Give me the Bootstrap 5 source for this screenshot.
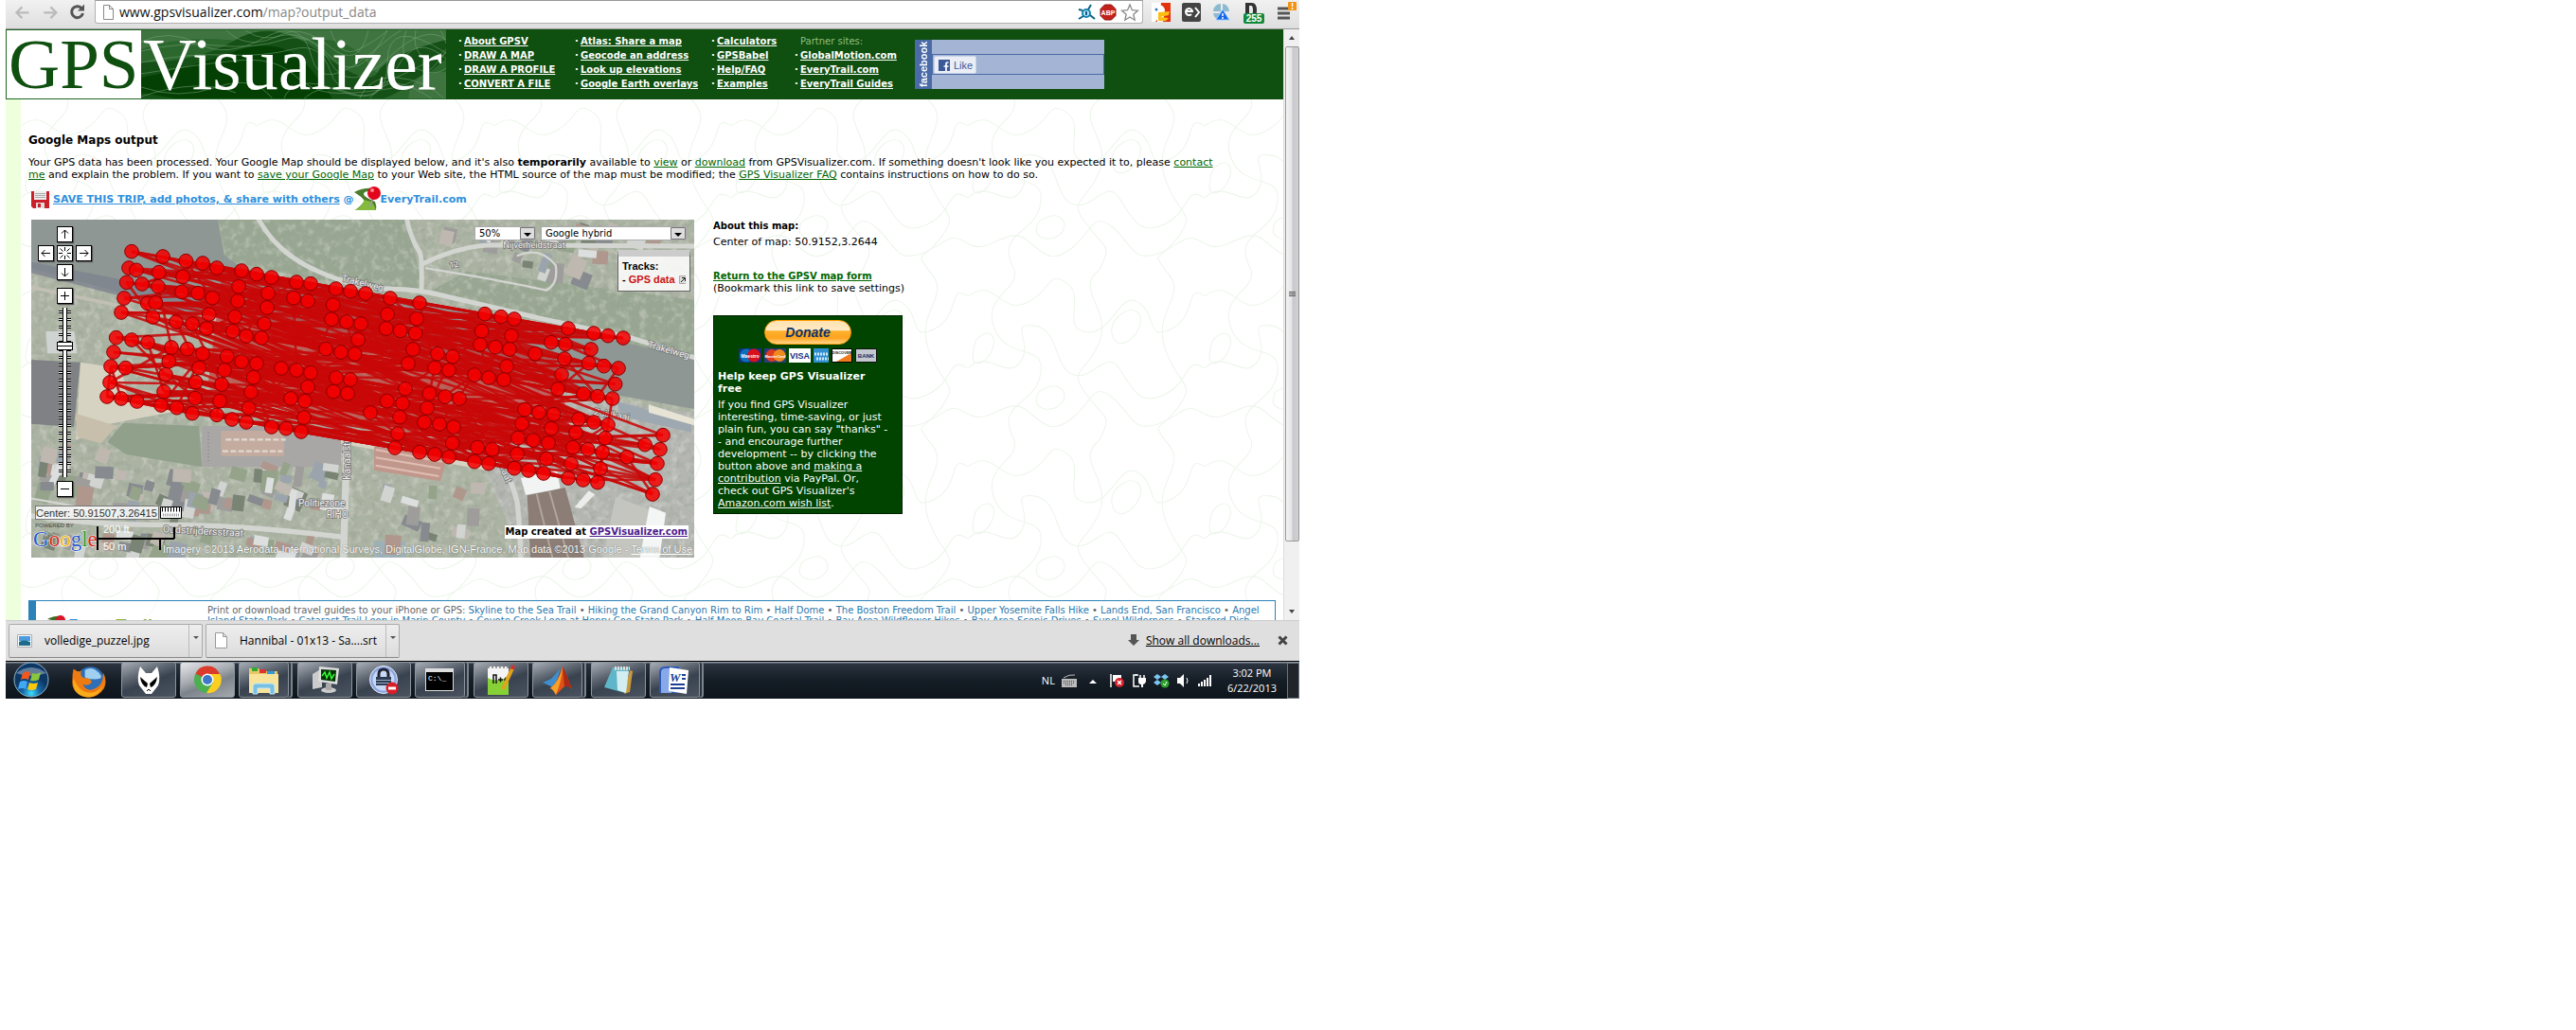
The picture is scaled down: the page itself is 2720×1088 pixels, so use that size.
<!DOCTYPE html>
<html lang="en">
<head>
<meta charset="utf-8">
<meta name="viewport" content="width=device-width, initial-scale=1">
<title>GPS Visualizer: Google Maps output</title>
<link href="https://cdn.jsdelivr.net/npm/bootstrap@5.3.0/dist/css/bootstrap.min.css" rel="stylesheet">
<style>
body{background:#fff;color:#000;font:11px/13px "DejaVu Sans",Verdana,sans-serif}
.screen{max-width:1366px;margin-left:6px}
.ui{font-family:"Open Sans","Noto Sans",sans-serif}
button{padding:0;border:0;background:none;color:inherit}
svg{display:block}
/* browser toolbar */
.toolbar{height:31px;background:linear-gradient(#f1f1f1,#dedede);border-bottom:1px solid #999;padding:0 2px 5px 1px}
.toolbar button{width:30px;height:25px}
.omni{height:25px;border:1px solid #b0b0b0;border-top-color:#999;border-radius:0 0 3px 3px;background:#fff;margin:0 9px 0 3px;padding:0 3px 0 5px}
.urlbox{font-size:14px;line-height:22px;color:#888}
.urlbox b{font-weight:400;color:#111}
.exts{gap:12px}
/* page header */
.viewport{height:624px;overflow:hidden}
.site{background:#0f4f0f;height:74px}
.brand{width:465px;border:1px solid #1c6620;font:78px/72px "Liberation Serif",serif}
.brand .gps{width:142px;background:#fff;color:#0f4f0f;padding-left:2px;font-size:75px}
.brand .viz{background:#0b480b;color:#fff;padding-left:2px;position:relative}
.brand .viz svg{position:absolute;inset:0}
.brand .viz span{position:relative}
.menus{display:grid;grid-template-columns:123px 144px 88px 127px;padding-left:13px}
.menu{font-size:10px;line-height:15px;font-weight:700;padding:5px 0 0;margin:0;list-style:none;white-space:nowrap}
.menu a{color:#fff}
.menu li::before{content:"·";color:#fff;display:inline-block;width:6px}
.menu li.plain::before{content:""}
.menu li.plain{font-weight:400;color:#8fbf7f}
.fb{width:200px;height:52px;margin-top:11px;background:#a4b4d4}
.fbtag{width:18px;height:52px;background:#4a6ba8;color:#fff;font:700 11px/18px "Liberation Sans",sans-serif;writing-mode:vertical-rl;transform:rotate(180deg);text-align:center}
.fbrow{height:22px;border:1px solid #4a6ba8;margin-top:15px;padding:1px}
.fbrow button{background:#eceef5;border:1px solid #cad4e7;color:#3b5998;font:11px/16px "Liberation Sans",sans-serif;width:45px;height:19px;border-radius:2px}
/* page body */
.main{border-left:16px solid #eeffdd;height:550px;padding:36px 8px 0;background-size:250px 180px;
background-image:url("data:image/svg+xml,%3Csvg xmlns='http://www.w3.org/2000/svg' viewBox='0 0 360 260' width='360' height='260' fill='none' stroke='%23edf6eb' stroke-width='1.6'%3E%3Cpath d='M0 40C40 10 50 70 90 50S120 0 150 20 140 90 180 95 230 30 260 50 270 110 310 90 330 20 360 40'/%3E%3Cpath d='M0 150C30 120 60 170 80 140S60 80 100 85 130 150 160 160 210 120 230 150 260 210 300 190 330 130 360 150'/%3E%3Cpath d='M0 220C30 240 60 190 90 215S130 250 160 225 190 170 220 195 250 250 290 235 330 200 360 220'/%3E%3Cpath d='M70 0C80 30 20 40 40 90S120 110 110 160 40 200 70 260M200 0C160 30 220 60 200 110S150 150 180 190 220 220 200 260M300 0C340 40 280 60 300 120S350 170 320 210 280 230 300 260'/%3E%3Cpath d='M230 70c25-20 40 0 30 20s-30 30-38 15 0-28 8-35zM120 180c20-10 35 10 22 24s-40 10-38-6 8-14 16-18zM20 100c15-10 25 5 15 25s-30 25-28 5 5-25 13-30z'/%3E%3C/svg%3E")}
.main a{color:#060}
.main h1{font-size:12px;line-height:14px;font-weight:700;margin:0 0 10px}
.intro{margin:0 0 6px;padding-right:50px}
.save{font-weight:700;font-size:11px;color:#2e8fdc;height:26px;margin:0 0 9px 3px}
.save a{color:#2e8fdc}
.mapbox{width:700px;height:357px;position:relative;margin-left:3px;flex:none;background:#a2aa98}
.over{position:absolute}
.pad{display:grid;grid-template-columns:repeat(3,17px);gap:3px;left:7px;top:7px}
.kbtn{width:17px;height:17px;background:#fff;border:1px solid #000;box-shadow:1px 1px 1px #555}
.zoomer{left:27px;top:72px;width:17px}
.railbox{height:179px}
.rail{appearance:none;-webkit-appearance:none;width:179px;height:17px;margin:0;transform:translate(-81px,81px) rotate(-90deg);
background:linear-gradient(#000,#000) 0 50%/100% 5px no-repeat,repeating-linear-gradient(90deg,transparent 0 5px,#000 5px 6px,#fff 6px 7px,#000 7px 8px) 50% 50%/100% 13px no-repeat}
.rail::-webkit-slider-runnable-track{height:17px;background:linear-gradient(#fff,#fff) 0 50%/100% 3px no-repeat}
.rail::-webkit-slider-thumb{-webkit-appearance:none;width:9px;height:17px;background:linear-gradient(90deg,#fff 3px,#000 3px 4px,#fff 4px);border:1px solid #000}
.picks{right:8px;top:7px;gap:5px}
.picks select{appearance:none;height:15px;border:1px solid #aaa;border-radius:0;padding:0 4px;font:10px/13px "DejaVu Sans",sans-serif;color:#000;
background:#fff url("data:image/svg+xml,%3Csvg xmlns='http://www.w3.org/2000/svg' width='16' height='13'%3E%3Cpath fill='%23ddd' stroke='%23777' d='M.5.5h15v12H.5z'/%3E%3Cpath d='M4 6h8l-4 4z'/%3E%3C/svg%3E") right/16px 13px no-repeat}
.tracks{right:4px;top:32px;width:77px;background:#fffd;border:1px solid #666;border-top:7px solid #ccc;font:700 11px/14px "Liberation Sans",sans-serif;padding:3px 4px;height:44px}
.tracks span{color:#c11}
.coord{left:4px;top:302px;width:131px;height:15px;border:1px solid #777;background:#fffc;font:11px/11px "Liberation Sans",sans-serif;color:#333;padding:0}
.made{right:6px;bottom:20px;background:#fff;font-size:10px;line-height:14px;font-weight:700;padding:0 1px}
.main .made a{color:#4b1a8c}
.credit{right:2px;bottom:2px;font:11px/13px "Liberation Sans",sans-serif;color:#fff;text-shadow:0 0 1px #444;white-space:nowrap}
.main .credit a{color:#fff}
.about{font-size:11px;line-height:13px;padding-left:20px}
.about .cap{font-size:10px}
.about .back{margin-top:23px}
.donate{width:200px;margin-top:22px;background:#040;color:#fff;border:1px solid #020;padding:4px}
.main .donate a{color:#fff}
.donate button{width:92px;height:26px;border-radius:13px;background:linear-gradient(#ffe3b0,#ffe9c4 40%,#ffb02e 45%,#ffa41f 75%,#ffd890);border:1px solid #f90;color:#0c3469;font:italic 700 14px/22px "Liberation Sans",sans-serif}
.guides{margin:45px 0 0;border:1px solid #2a82b8;border-left-width:8px;background:#fff8;font-size:10px;line-height:11px;color:#666;padding:4px 0 0 10px;white-space:nowrap}
.guides .side{width:171px;flex:none}
.main .guides a{color:#2a7ab0;text-decoration:none}
.sb{width:17px;background:#f0f0f0;border-left:1px solid #ddd}
.sb .thumb{height:523px;margin-left:1px;border:1px solid #999;border-radius:2px;background:linear-gradient(90deg,#f4f4f4,#e4e4e4 45%,#c8c8cd 55%,#d0d0d4)}
.sb button{height:18px}
/* download shelf */
.shelf{height:43px;background:#dfdfdf;border-top:1px solid #ccc;font-size:12px;color:#000;padding:0 12px 1px 3px;gap:3px}
.dl{height:36px;border:1px solid #aaa;border-bottom-color:#888;border-radius:2px;background:linear-gradient(#eee,#dcdcdc);width:205px}
.dl .more{width:14px;height:34px;border-left:1px solid #bbb}
/* taskbar */
.taskbar{height:40px;background:linear-gradient(#8a93a0 0 1px,#2b3440 2px,#151d26 50%,#0d141b);border-top:1px solid #000}
.plainbtn{width:61px;height:38px}
.task{width:58px;height:38px;margin-right:4px;border:1px solid #8c949e;border-radius:3px;background:linear-gradient(160deg,#a9aeb6,#5d6671 35%,#39434f 55%,#4a535f)}
.task.on{background:linear-gradient(160deg,#e6e7ea,#a9adb3 40%,#7d838b 60%,#a5a9af)}
.task.pile{width:53px;box-shadow:3px 0 0 -1px #2a333e,4px 0 0 0 #7b838d;margin-right:9px}
.tray{color:#fff;font-size:11px;line-height:16px;gap:7px}
</style>
<script src="https://cdn.jsdelivr.net/npm/bootstrap@5.3.0/dist/js/bootstrap.bundle.min.js"></script>
</head>
<body>
<div class="screen">

<div class="toolbar ui d-flex">
  <button aria-label="Back"><svg width="30" height="25"><path d="M10 12.500h15M17 6l-6.500 6.500L17 19" fill="none" stroke="#bbb" stroke-width="2.500" transform="translate(1 2) scale(.9)"/></svg></button>
  <button aria-label="Forward"><svg width="30" height="25"><path d="M7 12.500h15M15 6l6.500 6.500L15 19" fill="none" stroke="#bbb" stroke-width="2.500" transform="translate(3 2) scale(.9)"/></svg></button>
  <button aria-label="Reload"><svg width="30" height="25"><path d="M19 8.500A6 6 0 1 0 20.500 14" fill="none" stroke="#555" stroke-width="3"/><path d="M22 4.500v7h-7z" fill="#555"/></svg></button>
  <div class="omni d-flex align-items-center flex-grow-1">
    <svg width="20" height="20"><path d="M3.500 2.500h6l4 4v11h-10zM9.500 2.500v4h4" fill="#fff" stroke="#888"/></svg>
    <div class="urlbox flex-grow-1"><b>www.gpsvisualizer.com</b>/map?output_data</div>
    <div class="d-flex align-items-center gap-1">
      <svg width="20" height="20"><circle cx="10" cy="11" r="4" fill="#bfe8f7" stroke="#1683ad" stroke-width="2"/><path d="M6 8 2 7M12 7l3-5M14 13l5 4M7 14l-5 3" stroke="#0d6285" stroke-width="2"/><path d="M10 9v4" stroke="#0a5a85" stroke-width="2"/></svg>
      <svg width="18" height="18"><path d="M5.500 1h7L17 5.500v7L12.500 17h-7L1 12.500v-7z" fill="#c3221c" stroke="#8d1510"/><text x="9" y="12" font-size="7" font-weight="700" fill="#fff" text-anchor="middle" font-family="Liberation Sans">ABP</text></svg>
      <svg width="20" height="20"><path d="m10 2 2.400 5.700 6 .5-4.600 4 1.400 6L10 15l-5.200 3.200 1.400-6-4.600-4 6-.5z" fill="#fff" stroke="#888" stroke-width="1.300"/></svg>
    </div>
  </div>
  <div class="exts d-flex align-items-center">
    <svg width="20" height="20"><path fill="#fff" d="M0 0h20v20H0z"/><path fill="#e3320e" d="M10 0h10v20H4l4-6z"/><path fill="#fff" d="M2 6c2-6 11-5 12 2l-2 12H6z"/><path fill="#fdbd12" d="M7 10l12-1-1 4-9 2 9 1-3 3H7z"/><circle cx="5" cy="7" r="1.500" fill="#37b"/></svg>
    <svg width="20" height="20"><rect width="20" height="20" rx="2" fill="#444"/><path d="M5 9h6a3.500 3.500 0 1 0-1 3M14 5l4 5-4 5" fill="none" stroke="#fff" stroke-width="2"/></svg>
    <svg width="20" height="20"><path d="M9 1v8H1a8 8 0 0 1 8-8zM11 1a8 8 0 0 1 7 8h-7zM1 11h8v7a8 8 0 0 1-8-7z" fill="#8cbad0"/><path d="M11 7l7 11H4z" fill="#1565e8" stroke="#9cf"/><path d="M11 11v3M11 15v2" stroke="#fff" stroke-width="1.500"/></svg>
    <svg width="24" height="24"><path d="M3 2h7q5 0 5 8t-5 8H3zM7 5v10h2q2 0 2-5t-2-5z" fill="#333" fill-rule="evenodd"/><rect x="1" y="13" width="22" height="11" rx="2" fill="#128a3c"/><text x="12" y="22" font-size="10" font-weight="700" fill="#fff" text-anchor="middle" font-family="Liberation Sans">255</text></svg>
    <svg width="22" height="24"><path d="M1 8h13M1 13h13M1 18h13" stroke="#555" stroke-width="3"/><rect x="12" y="1" width="9" height="9" rx="1" fill="#f29312"/><path d="M16.500 2v4M16.500 7v2" stroke="#fff" stroke-width="1.500"/></svg>
  </div>
</div>

<div class="viewport d-flex">
 <div class="flex-grow-1">
  <header class="site d-flex">
    <div class="brand d-flex">
      <div class="gps">GPS</div>
      <div class="viz flex-grow-1">
        <svg width="322" height="72" fill="#2a6a2d"><path fill="#3f7440" d="M0 0h322v74H0z"/><path fill="#2c672e" d="M0 20Q40 6 90 10t90 0 60 26 82-6v44H0z"/><path fill="#155016" d="M0 34q60 0 100-24t90 14 60 20 72-34v20q-40 34-72 44H0z"/><path fill="#044004" d="M0 50Q50 40 100 22t80 20 20 32H50L0 66z"/><path d="M322 44q-40 0-40 30h40z" fill="#3f7440"/><g fill="none" stroke="#79a57a" stroke-width=".7" opacity=".75"><path d="M0 12q30-14 60 2t70-6 50 20 70-10 72-4M0 22q40-10 80-6t70-6 50 24 60-4 62-20M0 34q50-10 90-8t70-6 40 24 60 10 62-34M0 46q60-10 100-14t60 14 40 20 60-4 62-40M0 60q40 14 80 0t60 14M90 0q20 20 50 8t60 20 60-28M110 0q20 14 40 4t50 14 40-18M0 70q60-20 100-4M150 74q10-30 60-10t50-30 62-10M170 74q20-20 50-8t50-26 52-10M230 74q10-26 40-24t52 24M240 74q14-20 30-18t40 18M200 0q10 30 30 20t30-20M280 0q-10 30 10 40t32 0M290 0q-4 20 8 28t24-4"/></g></svg>
        <span>Visualizer</span>
      </div>
    </div>
    <nav class="menus">
    <ul class="menu"><li><a href="#">About GPSV</a></li><li><a href="#">DRAW A MAP</a></li><li><a href="#">DRAW A PROFILE</a></li><li><a href="#">CONVERT A FILE</a></li></ul>
    <ul class="menu"><li><a href="#">Atlas: Share a map</a></li><li><a href="#">Geocode an address</a></li><li><a href="#">Look up elevations</a></li><li><a href="#">Google Earth overlays</a></li></ul>
    <ul class="menu"><li><a href="#">Calculators</a></li><li><a href="#">GPSBabel</a></li><li><a href="#">Help/FAQ</a></li><li><a href="#">Examples</a></li></ul>
    <ul class="menu"><li class="plain">Partner sites:</li><li><a href="#">GlobalMotion.com</a></li><li><a href="#">EveryTrail.com</a></li><li><a href="#">EveryTrail Guides</a></li></ul>
    </nav>
    <div class="fb d-flex"><div class="fbtag">facebook</div>
      <div class="flex-grow-1"><div class="fbrow d-flex"><button class="d-flex align-items-center gap-1 ps-1"><svg width="12" height="12"><path fill="#3b5998" d="M0 0h12v12H0z"/><path d="M10.500 3H9q-1 0-1 1v8M5.500 7h5" fill="none" stroke="#fff" stroke-width="1.700"/></svg>Like</button></div></div></div>
  </header>

  <main class="main">
    <h1>Google Maps output</h1>
    <p class="intro">Your GPS data has been processed. Your Google Map should be displayed below, and it's also <b>temporarily</b> available to <a href="#">view</a> or <a href="#">download</a> from GPSVisualizer.com. If something doesn't look like you expected it to, please <a href="#">contact me</a> and explain the problem. If you want to <a href="#">save your Google Map</a> to your Web site, the HTML source of the map must be modified; the <a href="#">GPS Visualizer FAQ</a> contains instructions on how to do so.</p>
    <div class="save d-flex align-items-center">
      <svg width="19" height="19" class="me-1"><path d="M0 1h19v18H2l-2-2z" fill="#cb1f2a"/><path fill="#eee" d="M3 1h13v9H3z"/><path stroke="#aaa" d="M4 3.500h11M4 5.500h11M4 7.500h11"/><path fill="#ddd" d="M5 13h9v6H5z"/><path fill="#cb1f2a" d="M7 14h3v4H7z"/></svg>
      <span><a href="#">SAVE THIS TRIP, add photos, &amp; share with others</a> @</span>
      <svg width="28" height="26"><path d="M0 6q10-5 19-4l-3 3q-6 0-6 3t12 8q2 5 1 9H1q11-8 9-11T0 6z" fill="#4a7d2c"/><path d="M1 25q10-6 9-11l8 2q4 4 5 9z" fill="#85bb3c"/><path d="M20 12l-3 9" stroke="#999" stroke-width="2"/><circle cx="21" cy="7" r="7" fill="#e2061d"/><circle cx="19" cy="4" r="2" fill="#ff8a8a"/></svg>
      <span>EveryTrail.com</span>
    </div>

    <div class="d-flex">
      <div class="mapbox">
        <svg width="700" height="357" viewBox="99 36 2100 1071" id="sat" font-family="Roboto, sans-serif">
          <defs>
            <filter id="grain" x="0" y="0" width="1" height="1"><feTurbulence type="fractalNoise" baseFrequency=".045" numOctaves="4" seed="4"/><feColorMatrix values="0 0 0 0 .22  0 0 0 0 .28  0 0 0 0 .2  2.6 0 0 0 -1.2"/></filter>
            <filter id="glint" x="0" y="0" width="1" height="1"><feTurbulence type="fractalNoise" baseFrequency=".04" numOctaves="3" seed="9"/><feColorMatrix values="0 0 0 0 .86  0 0 0 0 .85  0 0 0 0 .8  2.6 0 0 0 -1.25"/></filter>
          </defs>
          <path fill="#9ba491" d="M99 36h2100v1071H99z"/>
          <path fill="#84957c" d="M690 36h600l50 220-340-30-280-60zM1480 200l719 90v190l-850-210z"/>
          <path fill="#a6a8a3" d="M1640 560l559 90v457h-540L1500 760zM640 690h460v120H640z"/>
          <path filter="url(#grain)" opacity=".55" d="M99 36h2100v1071H99z"/>
          <path filter="url(#glint)" opacity=".35" d="M99 36h2100v1071H99z"/>
          <path fill="#78827f" d="M99 36h591l20 110q60 70 390 110l250 50 250 45 250 45 349 80v160l-499-90-1000-200-140-30-461-126z"/>
          <path fill="#646a78" opacity=".8" d="M99 170l360 70 200 40-30 60-200-50-330-85z"/>
          <path d="M99 250l260 55 340 110" fill="none" stroke="#b6b2a6" stroke-width="12"/>
          <path fill="#65686c" d="M99 480l155 8-20 205-135-10z"/><path fill="#c6cac8" d="M145 390h90l10 70H150z"/>
          <path fill="#cfcab6" d="M255 488l130 20 20 100 250 50 900 160-20 12-700-130-260-60-235 45-100 50z"/><path fill="#bcb29a" d="M240 650l130 40-50 55-75-20z"/>
          <path fill="#7b8d74" d="M340 740l50-60 240 10 10 130-240-40z"/>
          <path fill="#989595" d="M640 690h410l30 20v110H640z"/><path fill="#b99b8c" d="M700 705h200v80H700z"/><path stroke="#ddd2c8" stroke-width="7" stroke-dasharray="18 7" d="M715 733h190M705 770h190"/><path stroke="#666" stroke-width="4" stroke-dasharray="3 8" d="M660 710v95"/>
          <path fill="#b58375" d="M1185 745l230 50-20 70-210-35z"/><path stroke="#d9b1a4" stroke-width="6" d="M1190 765l210 38M1190 790l205 34M1190 815l200 34"/>
          <path fill="#eef2f0" d="M1650 855l115-25 10 60-110 18z"/><path fill="#75635b" d="M1670 910l120-25 60 222h-170z"/><path stroke="#a09488" stroke-width="6" d="M1700 905l50 202M1740 895l60 212"/>
          <path fill="#b9bab2" d="M1950 915l110 40-30 152h-120z"/><path fill="#f1f4f3" d="M2057 945l52 20-20 142h-62z"/><path fill="#e8e9e6" d="M1865 895l20 12-45 45-20-5z"/><path fill="#8b97a0" d="M1950 610l240 70v30l-220-50z"/><path fill="#e3dfcd" d="M2055 622l144 46v20l-144-41z"/>
          <path fill="#83a0b3" opacity=".7" d="M1185 1055h100v52h-100z"/>
          <g id="roofs"></g>
          <path fill="#fff" opacity=".17" d="M99 36h2100v1071H99z"/>
          <g fill="none" stroke="#d3d5d1" stroke-linecap="round">
            <path stroke-width="15" d="M820 36q60 110 190 165 110 50 230 55 80 0 160 20l320 75 280 60 199 62"/>
            <path stroke-width="15" d="M1288 30q10 60 42 110 8 20 5 115M1335 178q120-60 230-62l634 4"/>
            <path stroke-width="7" d="M1350 190q250 40 380 70 40-20 30-80-50-60-120-30M99 920q180 30 290 60"/>
            <path stroke-width="22" d="M1100 700l-12 407"/>
            <path stroke-width="16" d="M99 975q200 30 420 28t560 38M1560 760q60 90 78 170 8 60 12 177"/>
          </g>
          <g fill="#eee" stroke="#777" stroke-width="5" paint-order="stroke" font-size="30">
            <text transform="translate(1080 230) rotate(14)">Trakelweg</text><text x="1594" y="126" font-size="28">Nijverheidstraat</text><text transform="translate(1425 190) rotate(-10)" font-size="26">12</text>
            <text transform="translate(2050 440) rotate(16)">Trakelweg</text><text transform="translate(1880 655) rotate(9)">Zuidkaai</text>
            <text transform="translate(1110 860) rotate(-90)">Kanaalstraat</text><text x="945" y="945">Politiezone</text><text x="1034" y="980">RIHO</text>
            <text transform="translate(515 1027) rotate(3)" font-size="32">Oudstrijdersstraat</text><text transform="translate(1575 800) rotate(68)">straat</text>
          </g>
          <path fill="#c81010" opacity=".5" d="M700 230l560 110 500 130 60 300-760-90-400-130z"/>
          <g id="trk" stroke="#c80808" stroke-width="8" stroke-opacity=".88"></g>
          <g id="pts" fill="#f40000" fill-opacity=".86" stroke="#8c0000" stroke-width="3"></g>
        </svg>
        <div class="over pad">
          <i></i><button class="kbtn" aria-label="Pan up"><svg width="15" height="15"><path d="M7.500 12V3M4 6.500 7.500 3 11 6.500" fill="none" stroke="#000"/></svg></button><i></i>
          <button class="kbtn" aria-label="Pan left"><svg width="15" height="15"><path d="M12 7.500H3M6.500 4 3 7.500 6.500 11" fill="none" stroke="#000"/></svg></button>
          <button class="kbtn" aria-label="Center"><svg width="15" height="15"><path d="M7.500 1v4M7.500 14v-4M1 7.500h4M14 7.500h-4M2.500 2.500l3 3M12.500 2.500l-3 3M2.500 12.500l3-3M12.500 12.500l-3-3" stroke="#000"/></svg></button>
          <button class="kbtn" aria-label="Pan right"><svg width="15" height="15"><path d="M3 7.500h9M8.500 4 12 7.500 8.500 11" fill="none" stroke="#000"/></svg></button>
          <i></i><button class="kbtn" aria-label="Pan down"><svg width="15" height="15"><path d="M7.500 3v9M4 8.500 7.500 12 11 8.500" fill="none" stroke="#000"/></svg></button>
        </div>
        <div class="over zoomer">
          <button class="kbtn d-block" aria-label="Zoom in"><svg width="15" height="15"><path d="M3 7.500h9M7.500 3v9" stroke="#000"/></svg></button>
          <div class="railbox mt-1"><input class="rail" type="range" min="0" max="100" value="79" aria-label="Zoom level"></div>
          <button class="kbtn d-block mt-1" aria-label="Zoom out"><svg width="15" height="15"><path d="M3 7.500h9" stroke="#000"/></svg></button>
        </div>
        <div class="over picks d-flex">
          <select style="width:65px" aria-label="Opacity"><option>50%</option></select>
          <select style="width:154px" aria-label="Map type"><option>Google hybrid</option></select>
        </div>
        <div class="over tracks"><div>Tracks:</div><div class="d-flex align-items-center gap-1 text-nowrap"><div>- <span>GPS data</span></div><svg width="9" height="9"><path fill="#ddd" stroke="#aaa" d="M.5.5h8v8h-8z"/><path d="M2 7l4-4M3 2.500h3.500V6" fill="none" stroke="#222"/></svg></div></div>
        <input class="over coord" value="Center: 50.91507,3.26415" aria-label="Map center">
        <svg class="over" style="left:136px;top:302px" width="24" height="15" aria-hidden="true"><path fill="#fff" stroke="#000" d="M.500 1.500h22v12H.500z"/><path stroke="#000" stroke-dasharray="1 2" stroke-width="5" d="M2 4h20"/><path stroke="#999" stroke-dasharray="1 1" stroke-width="3" d="M3 10h18"/></svg>
        <svg class="over" style="left:2px;top:318px" width="152" height="37" font-family="Liberation Sans">
          <text x="2" y="7" font-size="6" fill="#444">POWERED BY</text>
          <g font-family="Liberation Serif" font-size="23" stroke="#fff" stroke-width="1" paint-order="stroke"><text x="0" y="27"><tspan fill="#2a5cc8">G</tspan><tspan fill="#d62c1f">o</tspan><tspan fill="#efb71a">o</tspan><tspan fill="#2a5cc8">g</tspan><tspan fill="#2c9b3a">l</tspan><tspan fill="#d62c1f">e</tspan></text></g>
          <path d="M68 6v25M68 19h81M149 7v12M134 19v12" stroke="#000" stroke-width="2" fill="none"/>
          <text x="74" y="13" font-size="11" fill="#fff">200 ft</text><text x="74" y="31" font-size="11" fill="#fff">50 m</text>
        </svg>
        <div class="over made">Map created at <a href="#">GPSVisualizer.com</a></div>
        <div class="over credit">Imagery ©2013 Aerodata International Surveys, DigitalGlobe, IGN-France, Map data ©2013 Google - <a href="#">Terms of Use</a></div>
      </div>
      <aside class="about">
        <div class="cap fw-bold">About this map:</div><div class="mt-1">Center of map: 50.9152,3.2644</div>
        <div class="cap back"><a href="#" class="fw-bold">Return to the GPSV map form</a></div><div>(Bookmark this link to save settings)</div>
        <div class="donate">
          <div class="text-center mb-1"><button>Donate</button></div>
          <svg class="mx-auto mb-2" width="146" height="15" font-family="Liberation Sans" font-size="6" font-weight="700" text-anchor="middle"><path fill="#15307a" d="M0 0h24v15H0z"/><circle cx="8" cy="7.500" r="7" fill="#0b6fc2"/><circle cx="16" cy="7.500" r="7" fill="#d8101a"/><text x="12" y="10" font-size="5" fill="#fff">Maestro</text><path fill="#2b3c7c" d="M27 0h23v15H27z"/><circle cx="35" cy="7.500" r="6.500" fill="#e03a20"/><circle cx="43" cy="7.500" r="6.500" fill="#f08a1c"/><text x="38.500" y="10" font-size="4" fill="#fff">MasterCard</text><path fill="#fff" d="M53 0h23v15H53z"/><text x="64.500" y="11" font-size="9" fill="#1a2f80">VISA</text><path fill="#2f8fd0" d="M79 0h16v15H79z"/><path stroke="#cfe9f8" stroke-width="3" stroke-dasharray="2 1" d="M80 6h15M82 11h13"/><path fill="#fff" stroke="#000" d="M98.500.500h21v14h-21z"/><path fill="#ee7c1c" d="M119 5v9h-16z"/><text x="109" y="6" font-size="4" fill="#222">DISCOVER</text><path fill="#c3c7cf" stroke="#111" d="M123.500.500h22v14h-22z"/><text x="134.500" y="10" fill="#1a2a66">BANK</text></svg>
          <div class="fw-bold mb-1">Help keep GPS Visualizer<br>free</div>
          <div class="text-nowrap">If you find GPS Visualizer<br>interesting, time-saving, or just<br>plain fun, you can say "thanks" -<br>- and encourage further<br>development -- by clicking the<br>button above and <a href="#">making a<br>contribution</a> via PayPal. Or,<br>check out GPS Visualizer's<br><a href="#">Amazon.com wish list</a>.</div>
        </div>
      </aside>
    </div>

    <div class="guides d-flex">
      <div class="side"><svg width="171" height="26"><path d="M2 15q8-4 14-3l-4 5z" fill="#3c6b24"/><circle cx="16" cy="16" r="5" fill="#d9152a"/><text x="24" y="27" font-size="16" font-weight="700" font-family="DejaVu Sans" fill="#2e8fdc">Every<tspan fill="#8db33a">Trail</tspan></text></svg></div>
      <div>Print or download travel guides to your iPhone or GPS: <a href="#">Skyline to the Sea Trail</a> • <a href="#">Hiking the Grand Canyon Rim to Rim</a> • <a href="#">Half Dome</a> • <a href="#">The Boston Freedom Trail</a> • <a href="#">Upper Yosemite Falls Hike</a> • <a href="#">Lands End, San Francisco</a> • <a href="#">Angel<br>Island State Park</a> • <a href="#">Cataract Trail Loop in Marin County</a> • <a href="#">Coyote Creek Loop at Henry Coe State Park</a> • <a href="#">Half Moon Bay Coastal Trail</a> • <a href="#">Bay Area Wildflower Hikes</a> • <a href="#">Bay Area Scenic Drives</a> • <a href="#">Sunol Wilderness</a> • <a href="#">Stanford Dish</a></div>
    </div>
  </main>
 </div>
 <div class="sb d-flex flex-column">
   <button aria-label="Scroll up"><svg width="16" height="18"><path d="M5 11l3-4 3 4z" fill="#444"/></svg></button>
   <div class="thumb d-flex align-items-center"><svg width="13" height="8"><path d="M3 1.500h7M3 3.500h7M3 5.500h7" stroke="#555"/></svg></div>
   <button class="mt-auto" aria-label="Scroll down"><svg width="16" height="18"><path d="M5 7l3 4 3-4z" fill="#444"/></svg></button>
 </div>
</div>

<div class="shelf ui d-flex align-items-center">
  <div class="dl d-flex align-items-center"><svg width="17" height="14" class="mx-2 ms-2"><path fill="#fff" stroke="#aaa" d="M.500.500h15v13H.500z"/><path fill="#4d9ade" d="M2 2h12v5H2z"/><path fill="#1d6c8a" d="M2 8q5-3 12 0v4H2z"/></svg><span class="ms-1 flex-grow-1">volledige_puzzel.jpg</span><button class="more" aria-label="File menu"><svg width="13" height="34"><path d="M4 12h6l-3 3z" fill="#555"/></svg></button></div>
  <div class="dl d-flex align-items-center"><svg width="15" height="17" class="mx-2 ms-2"><path fill="#fff" stroke="#999" d="M1.500.500h8l4 4v12h-12zM9.500.500v4h4"/></svg><span class="ms-1 flex-grow-1">Hannibal - 01x13 - Sa....srt</span><button class="more" aria-label="File menu"><svg width="13" height="34"><path d="M4 12h6l-3 3z" fill="#555"/></svg></button></div>
  <svg width="12" height="13" class="ms-auto"><path d="M3 0h6v6h3l-6 6-6-6h3z" fill="#555"/></svg>
  <a href="#" class="text-black ms-1 me-3">Show all downloads...</a>
  <button aria-label="Close"><svg width="11" height="11"><path d="M1.500 1.500l8 8M9.500 1.500l-8 8" stroke="#444" stroke-width="3"/></svg></button>
</div>

<div class="taskbar ui d-flex">
  <button class="plainbtn" aria-label="Start"><svg width="61" height="38"><defs><radialGradient id="orb" cy=".9"><stop offset="0" stop-color="#3be0ff"/><stop offset=".5" stop-color="#1768a8"/><stop offset="1" stop-color="#0d3764"/></radialGradient></defs><circle cx="27" cy="19" r="18" fill="url(#orb)" stroke="#8fb5cc"/><path d="M11 12q16-12 32 0-16 6-32 0z" fill="#fff" opacity=".35"/><path d="M18 12q4-3 8-1l-2 8q-4-2-8 0z" fill="#f0591e"/><path d="M28 12q5 2 9-1l-2 8q-4 2-9 1z" fill="#8cc63f"/><path d="M15 21q4-2 8 0l-2 8q-3-2-8 0z" fill="#3fa9f5"/><path d="M25 22q4 2 9 0l-2 7q-5 2-9 0z" fill="#fdc70c"/></svg></button>
  <button class="plainbtn" aria-label="Firefox"><svg width="61" height="38"><g transform="translate(-5 -2) scale(1.2)"><circle cx="28" cy="18" r="12" fill="#2e6fb8"/><path d="M23 9q6-4 12 2t-3 6-9-2z" fill="#9fd0f0"/><path d="M13 8q5 4 7 1-2 6 3 7 6 0 6 4-4 4-8 1 3 7 9 5 10-3 9-15 4 7 1 14-6 9-15 8Q11 30 12 18q0-6 1-10z" fill="#ee7a12"/><path d="M13 16q-2 15 12 17 12 0 15-14-2 9-12 10-10 0-15-13z" fill="#f9ab1a"/></g></svg></button>
  <button class="task" aria-label="foobar2000"><svg width="56" height="36"><path d="M19 4l6 7h6l6-7q4 12 1 20l-7 9h-6l-7-9Q15 16 19 4z" fill="#fff"/><path d="M19 15l8 7-1 4q-6-2-7-11zM37 15l-8 7 1 4q6-2 7-11z"/><path d="M26 30l2-2 2 2" fill="none" stroke="#000"/></svg></button>
  <button class="task on" aria-label="Chrome"><svg width="56" height="36"><circle cx="28" cy="18" r="14" fill="#4caf50"/><path d="M28 18 15.500 11.500A14 14 0 0 1 41 12z" fill="#dc3a2a"/><path d="M28 12h13.300A14 14 0 0 1 27 32l7-11z" fill="#fccf1f"/><circle cx="28" cy="18" r="6.500" fill="#fff"/><circle cx="28" cy="18" r="5" fill="#3f78c8"/></svg></button>
  <button class="task pile" aria-label="Explorer"><svg width="51" height="36"><path d="M10 6h10l2 3h18v23H10z" fill="#e9c765"/><path d="M13 5h6v4h-6z" fill="#3a3"/><path d="M21 7h7v4h-7z" fill="#d33"/><path d="M29 9h8v3h-8z" fill="#39d"/><path d="M10 12h31v20H10z" fill="#f8e39a"/><path d="M14 33V25q0-3 3-3h17q3 0 3 3v8h-5v-6H19v6z" fill="#79bfe2" stroke="#c6ecfa"/></svg></button>
  <button class="task" aria-label="PuTTY"><svg width="56" height="36"><path d="M15 12l10-6v20l-10 2z" fill="#ccc"/><path d="M22 4l21 2-2 17-20-3z" fill="#ddd"/><path d="M24 7l16 1-1 12-15-2z" fill="#053205"/><path d="M25 14l3-4 2 6 3-6 2 7 3-5" fill="none" stroke="#3f3" stroke-width="1.500"/><ellipse cx="32" cy="29" rx="8" ry="3" fill="#ccc"/><path d="M29 22h6v7h-6z" fill="#aaa"/></svg></button>
  <button class="task" aria-label="KeePass"><svg width="56" height="36"><circle cx="28" cy="18" r="14.500" fill="#89a6e0" stroke="#eef"/><circle cx="28" cy="18" r="11.500" fill="#c9d8f5"/><path d="M23 16v-4q0-5 5-5t5 5v4" fill="none" stroke="#223" stroke-width="3"/><path d="M20 15h16v9H20z" fill="#2b3a55"/><path stroke="#9ab" d="M20 18.500h16M20 21.500h16"/><circle cx="37" cy="27" r="6.500" fill="#d81e28"/><path d="M33 27h8" stroke="#fff" stroke-width="3"/></svg></button>
  <button class="task pile" aria-label="Command prompt"><svg width="51" height="36"><path fill="#ddd" d="M10 6h30v24H10z"/><path fill="#000" d="M11 10h28v19H11z"/><text x="13" y="19" font-size="8" fill="#fff" font-family="Liberation Mono">C:\_</text></svg></button>
  <button class="task" aria-label="Notepad++"><svg width="56" height="36"><path d="M14 4h22v30H14z" fill="#f5f5f5"/><path d="M14 16q10 6 22-2v20H14z" fill="#86d136"/><path stroke="#999" stroke-dasharray="2 2" stroke-width="2" d="M14 5h22"/><path d="M20 22v-9h3v9M25 18h5M27.500 15.500v5M31 18h4M33 15.500v5" fill="none" stroke="#111" stroke-width="1.500"/><path d="M40 6 30 28" stroke="#e4a11b" stroke-width="4"/><path d="M41 3l-1 4" stroke="#c33" stroke-width="4"/></svg></button>
  <button class="task pile" aria-label="MATLAB"><svg width="51" height="36"><path d="M10 21l9-4q5-5 10-12l-6 22z" fill="#3f8fd0"/><path d="M31 4q4 8 10 24-6-6-9-2l-8 8q-3-6-6-7 8-6 13-23z" fill="#e0521a"/><path d="M31 4q-1 16-7 30-3-6-6-7 9-6 13-23z" fill="#f7a12b"/><path d="M31 4q4 8 10 24-6-6-8-2z" fill="#a82a14"/></svg></button>
  <button class="task" aria-label="Notepad"><svg width="56" height="36"><path d="M40 8l3 1-3 22-6 2z" fill="#c99a3c"/><path d="M22 5h17l-4 27-22-6z" fill="#5fb6c8"/><path d="M26 9h13l-3 23-9-3z" fill="#d3eef3"/><path d="M24 6h16" stroke="#ddd" stroke-width="4" stroke-dasharray="2 1"/></svg></button>
  <button class="task pile" aria-label="Word"><svg width="51" height="36"><path d="M9 10q0-6 7-6h14v28H9z" fill="#2c58b8"/><path d="M11 10q0-4 5-4h6v26H11z" fill="#88a9e8"/><path d="M20 5l20 3-2 25-19-3z" fill="#fff"/><text x="20" y="20" font-size="13" font-weight="700" font-style="italic" fill="#1d3f94" font-family="Liberation Serif">W</text><path d="M33 13h4M33 17h4M21 23h15M21 27h15" stroke="#1d3f94" stroke-width="2"/></svg></button>
  <div class="tray ms-auto d-flex align-items-center">
    <span>NL</span>
    <svg width="16" height="14"><path fill="#bbb" d="M0 5h16v9H0z"/><path d="M2 4q6-4 12-3" fill="none" stroke="#bbb"/><path stroke="#444" stroke-dasharray="1 1" d="M2 7.500h12M2 9.500h12M4 11.500h8"/></svg>
    <svg width="20" height="8"><path d="M6 7l4-4 4 4z" fill="#fff"/></svg>
    <svg width="17" height="16"><path d="M2 1v14" stroke="#fff" stroke-width="1.500"/><path d="M4 2h9v7H4z" fill="#fff"/><circle cx="11" cy="10" r="5" fill="#d8202a"/><path d="M9 8l4 4M13 8l-4 4" stroke="#fff" stroke-width="1.500"/></svg>
    <svg width="16" height="16"><path d="M7 2H2v12h6M4.500 1v2" fill="none" stroke="#fff" stroke-width="1.500"/><path d="M7 5h8v4q-1 3-3 3v3h-2v-3q-3 0-3-3z" fill="#fff"/><path d="M9 2v3M13 2v3" stroke="#fff" stroke-width="1.500"/></svg>
    <svg width="17" height="16"><path d="M4 1l4 3-4 3-4-3zM12 1l4 3-4 3-4-3zM4 7l4 3-4 3-4-3zM12 7l4 3-4 3-4-3z" fill="#7cc5f2"/><circle cx="12" cy="11" r="4.500" fill="#2ba02b"/><path d="M10 11l2 2 2-4" stroke="#fff" fill="none"/></svg>
    <svg width="16" height="16"><path d="M1 5h3l4-4v14l-4-4H1z" fill="#fff"/><path d="M11 5q2 3 0 6" fill="none" stroke="#fff"/></svg>
    <svg width="16" height="14"><path fill="#fff" d="M0 10h2v3H0zM3 8h2v5H3zM6 6h2v7H6zM9 4h2v9H9zM12 1h2v12h-2z"/></svg>
    <div class="text-center ms-2 me-1">3:02 PM<br>6/22/2013</div>
    <button class="border border-secondary bg-dark" style="width:13px;height:38px" aria-label="Show desktop"></button>
  </div>
</div>
</div>

<script>
// waypoints of the track, in map units
var L=[417,137,516,153,589,167,642,174,687,189,765,198,813,209,860,219,939,234,984,239,1064,255,1110,263,408,189,432,196,503,203,579,217,401,235,450,240,501,248,576,265,627,269,673,284,756,248,753,294,849,269,846,315,930,284,975,294,1055,306,393,285,467,301,493,299,384,330,484,345,558,360,609,366,662,336,654,381,744,344,737,390,837,366,780,405,828,411,1050,352,1098,360,368,410,417,417,468,425,543,441,593,446,642,461,360,456,535,485,719,469,765,486,813,492,351,501,398,506,525,527,630,506,711,513,891,507,939,513,984,521,348,552,620,551,803,536,702,558,519,581,618,602,795,582,339,597,384,603,434,612,510,624,560,632,609,650,696,611,687,655,735,669,788,633,780,678,860,693,906,698,954,708,963,663,966,611,921,603,975,566,1032,446,1080,456,1124,462,1134,416,1065,537,1110,543,1056,581,1101,587];
var R=[48,270,126,285,219,300,117,336,210,350,33,366,113,381,158,388,206,396,198,447,183,492,276,461,324,470,267,506,312,513,426,335,477,344,519,351,416,389,510,404,411,432,459,440,504,447,495,501,393,528,438,537,486,543,690,381,771,396,816,404,864,411,636,425,681,431,585,461,762,447,678,477,755,491,803,500,849,507,669,527,657,573,738,588,783,596,830,603,839,557,174,572,116,611,165,618,250,587,300,597,345,603,243,633,63,648,156,662,234,678,282,684,327,693,150,714,141,759,219,773,267,780,312,788,323,744,402,758,449,764,393,803,438,809,519,824,564,831,612,840,690,855,737,861,783,869,552,638,597,647,644,653,543,683,636,698,531,728,579,735,627,744,528,779,621,794,723,668,771,678,816,686,714,711,705,758,752,764,798,773,807,728,699,809,792,825,876,788,933,749,990,719,981,764,972,809,966,860,957,906];
var P=[],i,s=7;
for(i=0;i<L.length;i+=2)P.push([L[i],L[i+1]]);
for(i=0;i<R.length;i+=2)P.push([R[i]+1110,R[i+1]]);
function rnd(){s=(s*16807)%2147483647;return s/2147483647}
var t="",c="";
P.forEach(function(p){
  c+='<circle cx="'+p[0]+'" cy="'+p[1]+'" r="22"/>';
  for(var n=0,k=0;n<2&&k<200;k++){
    var q=P[Math.floor(rnd()*P.length)],dx=q[0]-p[0],dy=q[1]-p[1];
    if(Math.abs(dx)>200&&Math.abs(dx)<850&&Math.abs(dy/dx-.22)<.28){t+='<path d="M'+p+'L'+q+'"/>';n++}
  }
  if(rnd()<.45){var z=P.filter(function(q){var d=Math.hypot(q[0]-p[0],q[1]-p[1]);return d>90&&d<230});z=z[Math.floor(rnd()*z.length)];t+='<path d="M'+p+'L'+z+'"/>'}
});
document.getElementById("trk").innerHTML=t;
document.getElementById("pts").innerHTML=c;
// houses and gardens
var cols=["#6f7479","#8b8a88","#b3aaa0","#a08376","#c9ccc9","#5f6b5a","#7f9173","#d5d9d8","#87929c"],h="";
function area(x0,y0,w,hh,n){for(var a=0;a<n;a++){var x=x0+rnd()*w,y=y0+rnd()*hh,b=22+rnd()*38,d=22+rnd()*44;h+='<path transform="translate('+(x|0)+' '+(y|0)+') rotate('+((rnd()*24+2)|0)+')" d="M0 0h'+(b|0)+'v'+(d|0)+'h-'+(b|0)+'z" fill="'+cols[a%9]+'"/>'}}
area(110,740,230,170,22);area(340,800,720,150,55);area(120,1020,900,50,34);area(1200,860,330,190,14);area(1380,40,760,60,22);area(1600,130,300,90,12);
document.getElementById("roofs").innerHTML=h;
</script>
</body>
</html>
